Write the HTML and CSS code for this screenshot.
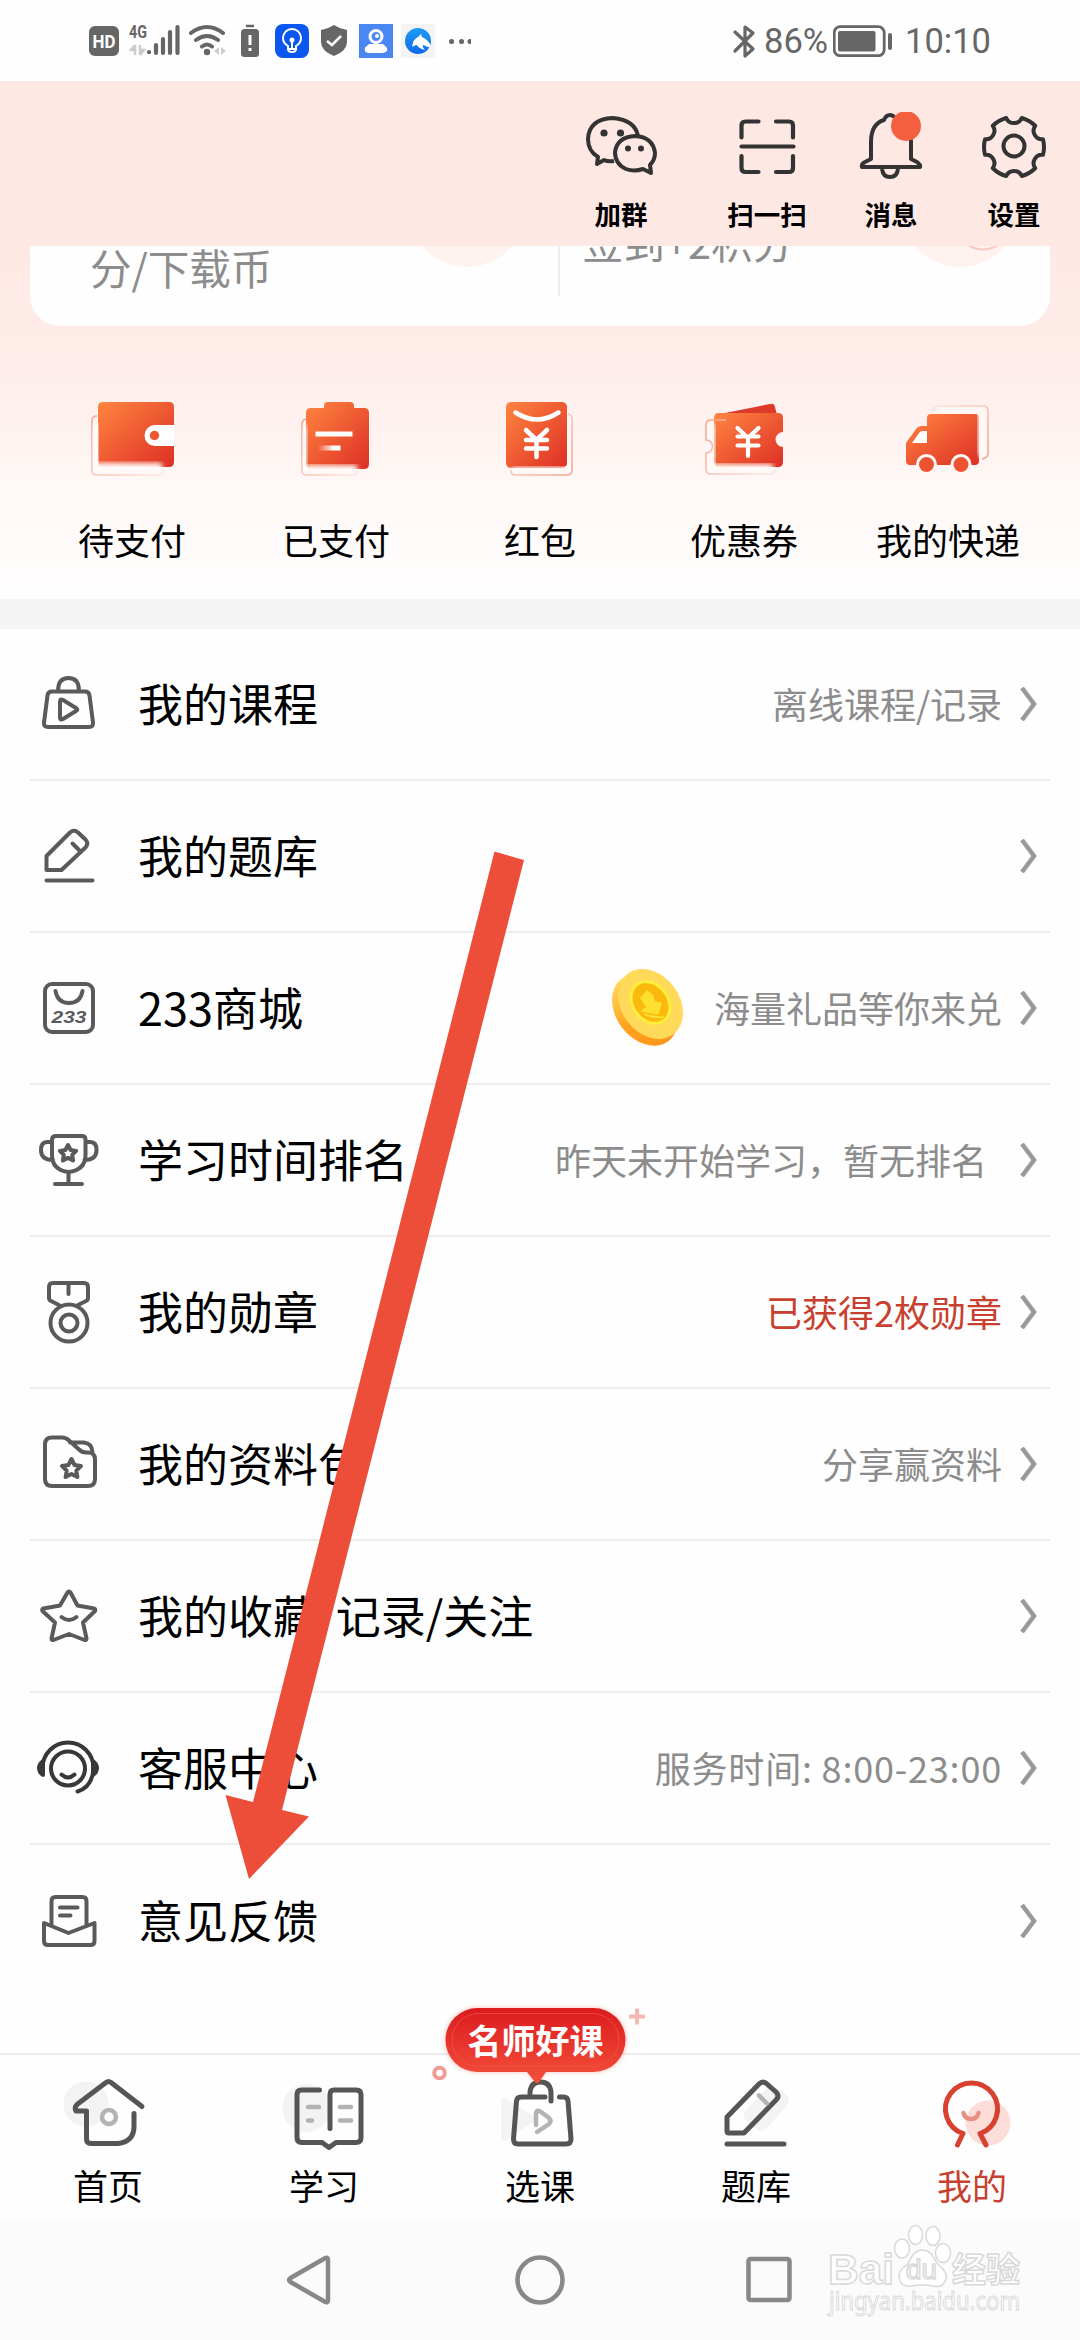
FILE: index.html
```html
<!DOCTYPE html>
<html lang="zh-CN">
<head>
<meta charset="utf-8">
<title>我的</title>
<link rel="stylesheet" href="styles.css">
</head>
<body>
<svg width="0" height="0" class="defs">
  <defs>
    <linearGradient id="orange" x1="0" y1="0" x2="1" y2="1"><stop offset="0" stop-color="#ff8540"/><stop offset="1" stop-color="#dd2f25"/></linearGradient>
    <linearGradient id="glass" x1="0" y1="0" x2="1" y2="0.6"><stop offset="0" stop-color="#f4a58f"/><stop offset="1" stop-color="#fde3dc"/></linearGradient>
    <linearGradient id="glassR" x1="1" y1="1" x2="0" y2="0"><stop offset="0" stop-color="#f4a58f"/><stop offset="1" stop-color="#fde3dc"/></linearGradient>
    <linearGradient id="gold" x1="0" y1="0" x2="0" y2="1"><stop offset="0" stop-color="#ffd75a"/><stop offset="0.5" stop-color="#ffa41f"/><stop offset="1" stop-color="#ff9518"/></linearGradient>
    <linearGradient id="horse" x1="0" y1="0" x2="0" y2="1"><stop offset="0" stop-color="#1f9bf5"/><stop offset="1" stop-color="#1268ea"/></linearGradient>
    <linearGradient id="fade" x1="0" y1="0" x2="1" y2="0"><stop offset="0" stop-color="#fff" stop-opacity="0"/><stop offset="0.7" stop-color="#fff"/></linearGradient>
    <linearGradient id="badge" x1="0" y1="0" x2="0" y2="1"><stop offset="0" stop-color="#dc1b1f"/><stop offset="1" stop-color="#f4503a"/></linearGradient>
    <filter id="soft"><feGaussianBlur stdDeviation="2.6"/></filter>
  </defs>
</svg>
<div class="screen">
  <div class="status">
    <div class="status-left">
      <svg width="30" height="30" viewBox="0 0 30 30"><rect width="30" height="30" rx="6" fill="#666"/><text x="15" y="22" class="hd" textLength="23" lengthAdjust="spacingAndGlyphs">HD</text></svg>
      <svg width="52" height="34" viewBox="129 24 52 34"><text x="129" y="38" class="g4" textLength="18" lengthAdjust="spacingAndGlyphs">4G</text><path d="M135 45v10M135 45l-4 5h4M140 45v10M140 55l4-5h-4" stroke="#ccc" stroke-width="2.5" fill="#ccc"/><path d="M149 52v.2M156 45v8M163 39v14M170 32v21M177.500 27v26" stroke="#666" stroke-width="4.200" stroke-linecap="round"/></svg>
      <svg width="38" height="34" viewBox="189 24 38 34"><g fill="none" stroke="#666" stroke-width="4" stroke-linecap="round"><path d="M191 33q16-12 32 0M196 40q11-8 22 0M202 46.500q5-4 10 0"/></g><circle cx="207" cy="52" r="3.200" fill="#666"/><path d="M219 47v8l-5-4zM221 47v8l5-4z" fill="#ccc"/></svg>
      <svg width="18" height="34" viewBox="241 24 18 34"><path d="M246 26h8" stroke="#666" stroke-width="2.500"/><rect x="241" y="29" width="18" height="28" rx="3.500" fill="#666"/><path d="M250 35v10M250 48v3" stroke="#fff" stroke-width="3"/></svg>
      <svg width="34" height="34" viewBox="275 24 34 34"><rect x="275" y="24" width="34" height="34" rx="8" fill="#0a56ee"/><path d="M288 49v-3q-5-3-5-8a9 9 0 0 1 18 0q0 5-5 8v3zM288 49q0 3 4 3t4-3M292 40v9" fill="none" stroke="#fff" stroke-width="2"/><circle cx="292" cy="40" r="2.500" fill="#fff"/></svg>
      <svg width="26" height="34" viewBox="321 24 26 34"><path d="M334 25q6 4 13 5v12q0 9-13 14q-13-5-13-14v-12q7-1 13-5z" fill="#666"/><path d="M327 41l5 4 9-9" fill="none" stroke="#fff" stroke-width="2.500"/></svg>
      <svg width="34" height="34" viewBox="359 24 34 34"><rect x="359" y="24" width="34" height="34" fill="#4a87f0"/><circle cx="376" cy="36.500" r="6" fill="none" stroke="#fff" stroke-width="3"/><circle cx="377" cy="36" r="2" fill="#fff"/><path d="M369 44h14l2 2q3 2 2 5-2 2-5 2h-12q-4 0-5-2-1-4 2-5z" fill="#fff"/></svg>
      <svg width="34" height="34" viewBox="401 24 34 34"><rect x="401" y="24" width="34" height="34" fill="#f4f4f4"/><circle cx="418" cy="41" r="13" fill="url(#horse)"/><path d="M412 47q1-8 6-10l3-3 1 3q5 2 8 7 1 4-2 3l-5-2q-1 2 2 5-7-2-8-5-2 0-5 2z" fill="#fff"/></svg>
      <svg width="23" height="8" viewBox="448 36 23 8"><path d="M451.500 40.500h.1M461.500 40.500h.1M470 40.500h2" stroke="#666" stroke-width="5" stroke-linecap="round"/></svg>
    </div>
    <div class="status-right">
      <svg width="24" height="36" viewBox="732 22 24 36"><path d="M735 31l18 17-8 7V26l8 6-18 18" fill="none" stroke="#666" stroke-width="3.200" stroke-linejoin="round" stroke-linecap="round"/></svg>
      <span class="pct">86%</span>
      <svg width="60" height="34" viewBox="835 23 60 34"><rect x="836.200" y="25.700" width="50" height="29" rx="6" fill="none" stroke="#666" stroke-width="2.800"/><rect x="840" y="30" width="37.500" height="20.500" rx="2" fill="#666"/><rect x="890" y="32" width="4" height="17" rx="2" fill="#666"/></svg>
      <span class="clock">10:10</span>
    </div>
  </div>

  <header class="topbar">
    <div class="action"><svg width="80" height="70" viewBox="581 112 80 70"><g fill="none" stroke="#333" stroke-width="4" stroke-linejoin="round"><path d="M614 161q-6 1-10-1l-7 4 1-7q-10-6-10-18 1-20 25-21 22 2 25 18"/><path d="M651 173l-8-4q-9 3-17 0-11-5-11-17 2-15 20-16 18 1 20 17 0 7-5 12z"/></g><g fill="#333"><circle cx="604" cy="133" r="3.600"/><circle cx="620.500" cy="133" r="3.600"/><circle cx="628" cy="148.500" r="3"/><circle cx="641" cy="148.500" r="3"/></g></svg><span>加群</span></div>
    <div class="action scan"><svg width="80" height="70" viewBox="727 112 80 70"><path d="M741.500 137.500v-12q0-4 4-4h13M776 121.500h13q4 0 4 4v12M741.500 156v12q0 4 4 4h13M776 172h13q4 0 4-4v-12M741.500 146.500h52" fill="none" stroke="#333" stroke-width="4.200" stroke-linecap="round"/></svg><span>扫一扫</span></div>
    <div class="action msg"><svg width="80" height="70" viewBox="851 112 80 70"><path d="M884 120q2-5 6-5t6 5q15 4 15 22v17l6 3q4 3 3 5h-58q-1-3 3-5l6-3v-17q0-18 13-22zM882 169q1 8 8 8t8-8" fill="none" stroke="#333" stroke-width="4" stroke-linejoin="round"/><circle cx="906" cy="126" r="15" fill="#f4603f"/></svg><span>消息</span></div>
    <div class="action set"><svg width="80" height="70" viewBox="-40 -35 80 70"><g fill="none" stroke="#333" stroke-width="4" stroke-linejoin="round"><path d="M29-7.800Q31 0 29 7.800A8.500 8.500 0 0 0 21.200 21.200Q15.500 26.800 7.800 29A8.500 8.500 0 0 0-7.800 29Q-15.500 26.800-21.200 21.200A8.500 8.500 0 0 0-29 7.800Q-31 0-29-7.800A8.500 8.500 0 0 0-21.200-21.200Q-15.500-26.800-7.800-29A8.500 8.500 0 0 0 7.800-29Q15.500-26.800 21.200-21.200A8.500 8.500 0 0 0 29-7.800z"/><circle cy="-1" r="10.500"/></g></svg><span>设置</span></div>
  </header>

  <section class="hero">
    <div class="card">
      <div class="card-half first"><span class="card-text coins">分/下载币</span></div>
      <div class="card-half"><span class="card-text sign">签到+2积分</span><svg class="sign-ring" width="30" height="10" viewBox="0 0 30 10"><path d="M0-1q15 9 30 0" fill="none" stroke="#fbc9c4" stroke-width="2"/></svg></div>
    </div>
    <div class="shortcuts">
      <div class="shortcut"><svg width="100" height="90" viewBox="82 394 100 90"><path fill="url(#orange)" d="M103 402h66q5 0 5 5v55q0 5-5 5h-66q-5 0-5-5v-55q0-5 5-5z"/><path d="M95 463v11h67v-11" fill="#fff9f7" filter="url(#soft)"/><path d="M97 416q-5 0-5 5v50q0 4 5 4h61q5 0 5-5" fill="none" stroke="url(#glass)" stroke-width="1.600"/><path d="M93 424h5v48h-5z" fill="#fff" filter="url(#soft)"/><path d="M174 425h-19a10.500 10.500 0 0 0 0 21h19z" fill="#fff"/><circle cx="154.500" cy="435.500" r="4.700" fill="#ee5732"/></svg><span>待支付</span></div>
      <div class="shortcut"><svg width="100" height="90" viewBox="286 394 100 90"><path fill="url(#orange)" d="M311 408h13v-2q0-4 4-4h22q4 0 4 4v2h10q5 0 5 5v51q0 5-5 5h-53q-5 0-5-5v-51q0-5 5-5z"/><path d="M305 465v9h52v-9z" fill="#fff9f7" filter="url(#soft)"/><path d="M306 419q-4 1-4 5v47q0 4 5 4h46q5 0 5-5" fill="none" stroke="url(#glass)" stroke-width="1.600"/><path d="M303 426h4v46h-4z" fill="#fff" filter="url(#soft)"/><path d="M315.500 431.500h37v5h-37z" fill="#fff"/><path d="M318 445.500h22.500v5H318z" fill="url(#fade)"/></svg><span>已支付</span></div>
      <div class="shortcut"><svg width="100" height="90" viewBox="490 394 100 90"><rect x="506" y="402" width="61" height="66" rx="5" fill="url(#orange)"/><path d="M512 467h58v7h-58z" fill="#fff9f7" filter="url(#soft)"/><path d="M568 414h3v56h-3z" fill="#fff" filter="url(#soft)"/><path d="M568 414q4 1 4 5v51q0 5-5 5h-52q-4 0-4-5" fill="none" stroke="url(#glassR)" stroke-width="1.600"/><g fill="none" stroke="#fff" stroke-width="4.500" stroke-linecap="round" stroke-linejoin="round"><path d="M515.500 412.500q21.500 14 43 0"/><path d="M526 430l10.500 10 10.500-10M526 440h21M526 448.500h21M536.500 440v17"/></g></svg><span>红包</span></div>
      <div class="shortcut"><svg width="100" height="90" viewBox="694 394 100 90"><path d="M720 414l50-10q4-1 5 3l2 8z" fill="#dd3b29"/><path fill="url(#orange)" d="M719 413h59q5 0 5 5v14a7.500 7.500 0 0 0 0 15v15q0 5-5 5h-59q-5 0-5-5v-44q0-5 5-5z"/><path d="M706 464h67v9h-67z" fill="#fff9f7" filter="url(#soft)"/><path d="M708 424h7v48h-7z" fill="#fff9f7" filter="url(#soft)"/><path d="M726 420h-15q-5 0-5 5v15a6.500 6.500 0 0 1 0 13v16q0 5 5 5h59q5 0 5-5" fill="none" stroke="url(#glass)" stroke-width="1.600"/><path d="M737.500 428l10.500 10 10.500-10M737.500 436.500h21M737.500 445.500h21M748 437v19" fill="none" stroke="#fff" stroke-width="4.200" stroke-linecap="round" stroke-linejoin="round"/></svg><span>优惠券</span></div>
      <div class="shortcut"><svg width="100" height="90" viewBox="898 394 100 90"><path fill="url(#orange)" d="M927 426v-8q0-4 4-4h44q4 0 4 4v43q0 4-4 4h-65q-4 0-4-4v-18l10-14q2-3 6-3z"/><path d="M978 410h8v46h-8z" fill="#fff9f7" filter="url(#soft)"/><path d="M938 406h44v7h-44z" fill="#fff9f7" filter="url(#soft)"/><path d="M933 412q0-6 5-6h45q5 0 5 5v42q0 5-6 6" fill="none" stroke="url(#glassR)" stroke-width="1.600"/><path d="M912 443l7-10q1-2 4-2h4v12z" fill="#fff"/><g fill="#ed5331" stroke="#fff8f6" stroke-width="3"><circle cx="926.500" cy="464.500" r="9"/><circle cx="961" cy="464.500" r="9"/></g></svg><span>我的快递</span></div>
    </div>
  </section>

  <main class="menu">
    <div class="row"><svg class="icon" viewBox="0 0 64 64"><path d="M16 18.500h33q4 0 4.500 4l3.500 27q.5 4.500-4 4.500H12q-4.500 0-4-4.500l3.500-27q.5-4 4.500-4zM22 18q0-13 10.500-13T43 18M24 28.500v16q0 3 3 1.500l13-8q2.500-1.500 0-3l-13-8q-3-1.500-3 1.500z"/></svg><span class="label">我的课程</span><span class="note">离线课程/记录</span><svg class="chev" viewBox="0 0 18 34"><path d="M2 1l12 16L2 33"/></svg></div>
    <div class="row"><svg class="icon" viewBox="0 0 64 64"><path d="M10.500 45V31L34 7.500q4-3.500 8 0l7.500 7q3.500 4 0 8L25.500 45zM36.500 18.500l6.500 6.500M10.500 55.500h46"/></svg><span class="label">我的题库</span><span class="note"></span><svg class="chev" viewBox="0 0 18 34"><path d="M2 1l12 16L2 33"/></svg></div>
    <div class="row"><svg class="icon" viewBox="0 0 64 64"><rect x="9" y="7" width="48" height="48" rx="7"/><path d="M19.500 14q2 12 13.500 12t13.500-12"/><text x="15.500" y="46" class="mall" textLength="35" lengthAdjust="spacingAndGlyphs">233</text></svg><span class="label">233商城</span>
      <svg class="coin" viewBox="0 0 78 78"><ellipse cx="36" cy="41" rx="29" ry="39" transform="rotate(-37 36 41)" fill="url(#gold)"/><ellipse cx="41.500" cy="35" rx="29" ry="38" transform="rotate(-37 41.500 35)" fill="#ffd95a"/><g transform="rotate(-37 41.500 33.500)"><ellipse cx="41.500" cy="33.500" rx="19" ry="24" fill="#ffee3a"/><ellipse cx="41.500" cy="33.500" rx="16" ry="21" fill="#fbb80d"/></g><path d="M38 22l6 5 1 6 7 1-3 11-16-3 5-4-6-9zM35 45q9 5 20 3" fill="#ffdf30" stroke="#ffdf30" stroke-width="1.500"/></svg>
      <span class="note">海量礼品等你来兑</span><svg class="chev" viewBox="0 0 18 34"><path d="M2 1l12 16L2 33"/></svg></div>
    <div class="row"><svg class="icon" viewBox="0 0 64 64"><path d="M20 7h26q3.500 0 3.500 3.500V26q0 15-17 17Q16 41 16 26V10.500Q16 7 20 7zM16 13h-5q-6 0-6 8 0 10 12 10M49.500 13h5q6 0 6 8 0 10-12 10M32.500 43v11M19 55h27"/><path d="M32 16l2.600 5 5.600.9-4 4 .9 5.600-5.100-2.600-5.100 2.600.9-5.600-4-4 5.600-.9z"/></svg><span class="label">学习时间排名</span><span class="note wide">昨天未开始学习，暂无排名</span><svg class="chev" viewBox="0 0 18 34"><path d="M2 1l12 16L2 33"/></svg></div>
    <div class="row"><svg class="icon" viewBox="0 0 64 64"><path d="M23 24l-8-4q-2-1-2-3V6q0-4 4-4h31q4 0 4 4v11q0 2-2 3l-8 4M32.500 3v10"/><circle cx="33" cy="42" r="18.500"/><circle cx="33" cy="42" r="8.500"/></svg><span class="label">我的勋章</span><span class="note red">已获得2枚勋章</span><svg class="chev" viewBox="0 0 18 34"><path d="M2 1l12 16L2 33"/></svg></div>
    <div class="row"><svg class="icon" viewBox="0 0 64 64"><path d="M16 4.500h10q4 0 7 3l10 9q3 3 7 3h2q7 0 7 7V46q0 7-7 7H16q-7 0-7-7V11.500q0-7 7-7zM34 9.500h14q8 1 8.500 9.500"/><path d="M35.500 26l3 6 6.500 1-4.700 4.600 1.100 6.400-5.900-3-5.900 3 1.100-6.400L26 33l6.500-1z"/></svg><span class="label">我的资料包</span><span class="note">分享赢资料</span><svg class="chev" viewBox="0 0 18 34"><path d="M2 1l12 16L2 33"/></svg></div>
    <div class="row"><svg class="icon" viewBox="0 0 64 64"><path d="M31.500 7.500q1.500-2 3 0l7 13 16.500 3q2 .5 1 2.500L47 37.500l3.500 16q0 2-2 1.500L33 49l-15.500 6q-2 .5-2-1.500l3.500-16L6.500 26q-1-2 1-2.500l16.500-3zM25.500 32q7.500 6 15 0"/></svg><span class="label">我的收藏/记录/关注</span><span class="note"></span><svg class="chev" viewBox="0 0 18 34"><path d="M2 1l12 16L2 33"/></svg></div>
    <div class="row"><svg class="icon dark" viewBox="0 0 64 64"><path d="M6.500 31a25.500 25.500 0 1 1 51 0q-1 19-16 23.500"/><circle cx="32" cy="31.500" r="17"/><path d="M25.500 37.500q6.500 6 13 0"/><path class="fill" d="M3 31q0-4 4-7v14q-4-3-4-7zM57 24q4 3 4 7t-4 7z"/></svg><span class="label">客服中心</span><span class="note hours">服务时间: 8:00-23:00</span><svg class="chev" viewBox="0 0 18 34"><path d="M2 1l12 16L2 33"/></svg></div>
    <div class="row"><svg class="icon" viewBox="0 0 64 64"><path d="M15.500 35V11q0-4 4-4h27q4 0 4 4v24M24 17.500h17.500M24 25.500h10.500M8 33l24.500 10L58.500 33v18q0 4-4 4H12q-4 0-4-4z"/></svg><span class="label">意见反馈</span><span class="note"></span><svg class="chev" viewBox="0 0 18 34"><path d="M2 1l12 16L2 33"/></svg></div>
  </main>

  <nav class="tabs">
    <div class="tab"><svg width="110" height="76" viewBox="53 2076 110 76"><circle cx="86" cy="2104" r="22.500" fill="#f3f3f3"/><path d="M142 2106.500l-31-24q-2.500-2-5 0l-29 22q-3 3-1 6.500h10.500v28q0 4.500 4.500 4.500h27q16-2 16-17v-13" class="line"/><circle cx="109" cy="2117" r="7" fill="#fff" stroke="#b3b3b3" stroke-width="4.500"/></svg><span>首页</span></div>
    <div class="tab"><svg width="110" height="76" viewBox="269 2076 110 76"><circle cx="306.500" cy="2108" r="24" fill="#f3f3f3"/><path d="M319.500 2090h-18q-4.500 0-4.500 4.500v43q0 5 5 5h20l7 5 7-5h20q5 0 5-5v-43q0-4.500-5-4.500h-22q-4 0-4 4.500v34" class="line"/><path d="M308 2107h11M308 2120.500h4M340 2107h11M340 2120.500h11" stroke="#b3b3b3" stroke-width="4.500" stroke-linecap="round"/></svg><span>学习</span></div>
    <div class="tab"><svg width="110" height="76" viewBox="485 2076 110 76"><path d="M501 2102q0-5 5-3l26 16q5 4 0 8l-26 17q-5 3-5-3z" fill="#f3f3f3"/><path d="M551 2101v-9q-1-10-10.500-10t-10.500 10v5M545 2097h-24q-4 0-4.500 4l-3 38q0 5 4.500 5h48q5 0 5-5l-3-38q-.5-4-4.500-4h-4" class="line"/><path d="M536 2125v-12q1-4 5-1l8 6q3 3 0 6l-12 8" fill="none" stroke="#b3b3b3" stroke-width="4.500" stroke-linecap="round"/></svg><span>选课</span></div>
    <div class="tab"><svg width="110" height="76" viewBox="701 2076 110 76"><path d="M770 2084l14 9q8 5 3 12l-21 24q-5 4-9 0l-10-8q-6-5-2-10z" fill="#f3f3f3"/><path d="M727 2131v-14l32-33q4-4 8 0l9 8q4 4 0 8l-32 33h-15q-2 0-2-2zM727 2144h57" class="line"/><path d="M759 2095.500l8 8" stroke="#b3b3b3" stroke-width="4.500" stroke-linecap="round"/></svg><span>题库</span></div>
    <div class="tab active"><svg width="110" height="76" viewBox="917 2076 110 76"><circle cx="988" cy="2123" r="22.500" fill="#fcddd8"/><path d="M957.500 2145l5.500-11.500a26 26 0 1 1 17 0l6 11.500" class="line"/><path d="M963.500 2113q1.500 6 7.500 6t7.500-6" fill="none" stroke="#ea8d84" stroke-width="4.500" stroke-linecap="round"/></svg><span>我的</span></div>
    <div class="promo"><svg width="224" height="96" viewBox="426 1998 224 96"><path d="M477 2008h117a32 32 0 0 1 0 64h-49l-6 10q-2 3-4 0l-7-10h-51a32 32 0 0 1 0-64z" fill="#f04a38" opacity=".35" filter="url(#soft)"/><path d="M477.500 2008h116a32 32 0 0 1 0 64h-47.500l-7 10q-2 2-4 0l-8-10h-49.500a32 32 0 0 1 0-64z" fill="url(#badge)"/><rect x="452" y="2013.500" width="167" height="53" rx="26.500" fill="none" stroke="#f0564c" opacity=".7"/><path d="M637 2008.500v16M629 2016.500h16" stroke="#f5b9b4" stroke-width="4"/><circle cx="439.500" cy="2073" r="5.300" fill="#fff" stroke="#f09c96" stroke-width="4"/></svg><span>名师好课</span></div>
  </nav>

  <footer class="sysnav">
    <svg width="50" height="56" viewBox="284 2252 50 56"><path d="M324.500 2258.500q3.500-2 3.500 1.500v40q0 3.500-3.500 1.500l-34-19.500q-3-2 0-4z"/></svg>
    <svg width="50" height="56" viewBox="515 2252 50 56"><circle cx="540" cy="2280" r="22.500"/></svg>
    <svg width="50" height="56" viewBox="744 2252 50 56"><rect x="748.500" y="2259" width="41" height="41" rx="2"/></svg>
  </footer>

  <svg class="watermark" width="210" height="110" viewBox="820 2214 210 110">
    <g class="wm">
      <text x="828" y="2284" class="wm-big" textLength="66" lengthAdjust="spacingAndGlyphs">Bai</text>
      <ellipse cx="902" cy="2248.500" rx="7.500" ry="9.500"/><ellipse cx="915.500" cy="2235" rx="7" ry="9.500"/><ellipse cx="933" cy="2236" rx="7" ry="9.500"/><ellipse cx="943" cy="2253" rx="7.500" ry="9.500"/>
      <path d="M922 2250q8 0 12 8t9 11q6 7 1 14-3 5-11 3-10-2-22 0-8 1-11-5-3-8 4-14 5-3 7-9 4-8 11-8z"/>
      <text x="906" y="2279" class="wm-du" textLength="31" lengthAdjust="spacingAndGlyphs">du</text>
      <text x="952" y="2282" class="wm-cn">经验</text>
      <text x="829" y="2310" class="wm-url" textLength="191" lengthAdjust="spacingAndGlyphs">jingyan.baidu.com</text>
    </g>
  </svg>
  <svg class="pointer" width="310" height="1040" viewBox="220 845 310 1040"><path d="M494.500 851.500L524 860 282 1810l27 6.500-60 62.500-23.500-84 27.500 7z" fill="#ed4e39"/></svg>
</div>
</body>
</html>
```
FILE: styles.css
```css
* { box-sizing: border-box; }
body { margin: 0; background: #fff; font-family: "Noto Sans CJK SC", sans-serif; color: #000; }
.defs { position: absolute; }
svg { display: block; flex: none; }
.screen { position: relative; width: 1080px; height: 2340px; overflow: hidden; display: flex; flex-direction: column; background: #fefefe; }

.status { height: 81px; display: flex; justify-content: space-between; padding: 0 89px 0 89px; color: #666; font-family: Roboto, sans-serif; font-size: 34.5px; line-height: 81px; background: #fefefe; }
.status-left, .status-right { display: flex; align-items: center; }
.status-left svg + svg { margin-left: 10px; }
.status-left svg:nth-child(3) { margin-left: 8px; }
.status-left svg:nth-child(4) { margin-left: 14px; }
.status-left svg:nth-child(5) { margin-left: 16px; }
.status-left svg:nth-child(6), .status-left svg:nth-child(7) { margin-left: 12px; }
.status-left svg:nth-child(8) { margin-left: 8px; }
.status-left svg:nth-child(9) { margin-left: 13px; }
.hd { font: 700 19px Roboto, sans-serif; fill: #fff; text-anchor: middle; }
.g4 { font: 700 18px Roboto, sans-serif; fill: #666; }
.pct { margin: 2px 5px 0 8px; }
.clock { margin: 2px 0 0 12px; }

.topbar { height: 165px; display: flex; padding: 31px 0 0 581px; background: #fee8e4; }
.action { width: 80px; display: flex; flex-direction: column; align-items: center; font-size: 26.5px; font-weight: 700; line-height: 38px; white-space: nowrap; }
.action span { margin-top: 13px; }
.scan { margin-left: 66px; }
.msg { margin-left: 44px; }
.set { margin-left: 43px; }

.hero { height: 353px; padding: 0 30px; background: linear-gradient(#fee8e4, #feedea 35%, #fff8f6 68%, #fffefe); }
.card { height: 80px; display: flex; overflow: hidden; border-radius: 0 0 30px 30px; background: #fefefe; }
.card-half { flex: 1; position: relative; overflow: hidden; }
.card-half.first { flex: 0 0 530px; background: linear-gradient(#ededed, #ededed) right top / 2px 50px no-repeat; }
.card-half::before { content: ""; position: absolute; left: 341px; top: -97px; width: 118px; height: 118px; border-radius: 50%; background: #fff2ef; }
.card-half.first::before { left: 378px; }
.card-text { position: absolute; color: #8c8c8c; font-size: 41.5px; line-height: 60px; white-space: nowrap; }
.coins { left: 60px; top: -9px; }
.sign { left: 22px; top: -35px; }
.sign-ring { position: absolute; left: 408px; top: 0; }
.shortcuts { display: grid; grid-template-columns: repeat(5, 204px); margin-top: 68px; }
.shortcut { display: flex; flex-direction: column; align-items: center; font-size: 36px; line-height: 54px; white-space: nowrap; }
.shortcut span { margin-top: 28px; }

.menu { height: 1454px; padding: 0 30px; border-top: 30px solid #f4f4f4; }
.row { height: 152px; display: flex; align-items: center; padding-left: 6px; border-bottom: 2px solid #ececec; }
.row:last-child { border-bottom: 0; }
.icon { width: 64px; height: 64px; margin-top: 2px; fill: none; stroke: #5a5a5a; stroke-width: 4; stroke-linejoin: round; stroke-linecap: round; }
.icon.dark { stroke: #383838; }
.icon .fill { fill: #383838; }
.mall { font: italic 700 17px "Liberation Sans", sans-serif; fill: #5a5a5a; stroke: none; }
.label { margin-left: 38px; font-size: 45px; line-height: 66px; margin-top: -2px; white-space: nowrap; }
.note { margin-left: auto; font-size: 36px; line-height: 54px; color: #8c8c8c; white-space: nowrap; margin-top: -2px; }
.note.wide { margin-right: 15px; }
.note.red { color: #c8402f; }
.note.hours { letter-spacing: 0.8px; }
.coin { width: 78px; height: 78px; margin-left: auto; margin-right: 27px; }
.coin + .note { margin-left: 0; }
.chev { width: 18px; height: 34px; margin: 0 12px 0 18px; fill: none; stroke: #999; stroke-width: 4.5; }

.tabs { position: relative; height: 167px; display: grid; grid-template-columns: repeat(5, 216px); border-top: 2px solid #ececec; background: #fefefe; }
.tab { display: flex; flex-direction: column; align-items: center; padding-top: 21px; font-size: 35px; line-height: 52px; }
.tab span { margin-top: 7px; }
.tab .line { fill: none; stroke: #555; stroke-width: 5; stroke-linecap: round; stroke-linejoin: round; }
.tab.active { color: #c8402f; }
.tab.active .line { stroke: #d8402f; }
.promo { position: absolute; left: 426px; top: -57px; }
.promo span { position: absolute; left: 0; width: 219px; text-align: center; top: 17px; color: #fff; font-size: 34px; font-weight: 700; line-height: 50px; }

.sysnav { height: 120px; display: flex; padding: 32px 0 0 284px; background: #fbfbfb; }
.sysnav svg { fill: none; stroke: #888; stroke-width: 4.5; }
.sysnav svg:nth-child(2) { margin-left: 181px; }
.sysnav svg:nth-child(3) { margin-left: 179px; }

.watermark { position: absolute; left: 820px; top: 2214px; }
.wm { fill: #fff; stroke: #d9d9d9; stroke-width: 1.5; }
.wm-big { font: 700 43px "Liberation Sans", sans-serif; }
.wm-du { font: 400 27px "Liberation Sans", sans-serif; }
.wm-cn { font: 700 34px "Noto Sans CJK SC", sans-serif; }
.wm-url { font: 400 25px "Noto Sans", sans-serif; stroke-width: 1; }
.pointer { position: absolute; left: 220px; top: 845px; }
```
